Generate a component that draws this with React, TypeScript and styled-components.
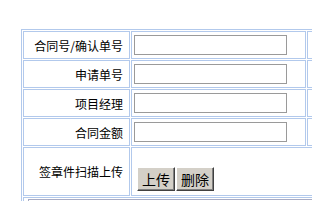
import React from "react";
import styled, { createGlobalStyle } from "styled-components";

const Global = createGlobalStyle`
  html, body {
    margin: 0;
    padding: 0;
    background: #ffffff;
    overflow: hidden;
  }
  body {
    font-family: "Noto Sans CJK SC", "Noto Sans", sans-serif;
  }
`;

const Page = styled.div`
  padding: 29px 0 0 21px;
  width: 500px;
`;

const FormGrid = styled.div`
  display: grid;
  grid-template-columns: 107px 175px 1fr;
  grid-template-rows: repeat(4, 28px) 49px 40px;
  gap: 1px;
  padding: 1px;
  border: 1px solid #b2c9ec;
  width: 420px;
  box-sizing: border-box;
`;

const Cell = styled.div<{ $span?: number }>`
  box-sizing: border-box;
  border: 1px solid #b2c9ec;
  display: flex;
  align-items: center;
  grid-column: ${(p) => (p.$span ? `span ${p.$span}` : "auto")};
`;

const LabelCell = styled(Cell)`
  justify-content: flex-end;
  padding-right: 6px;
  font-size: 12px;
  color: #000;
  white-space: nowrap;
`;

const FieldCell = styled(Cell)`
  padding-left: 2px;
`;

const UploadCell = styled(Cell)`
  align-items: flex-end;
  padding: 0 0 4px 5px;
`;

const TextInput = styled.input`
  box-sizing: border-box;
  width: 153px;
  height: 20px;
  margin: 0;
  padding: 0 2px;
  border: 1px solid #9a9a9a;
  background: #fff;
  outline: none;
  font-size: 12px;
`;

const ButtonGroup = styled.div`
  display: flex;
  gap: 1px;
`;

const ClassicButton = styled.button`
  box-sizing: border-box;
  width: 38px;
  height: 24px;
  padding: 0;
  margin: 0;
  background: #d4d0c8;
  border-style: solid;
  border-width: 1px;
  border-color: #ffffff #404040 #404040 #ffffff;
  box-shadow: inset -1px -1px 0 #808080;
  font-family: "Noto Sans CJK SC", sans-serif;
  font-size: 14px;
  line-height: 20px;
  color: #000;
  cursor: pointer;
`;

const FooterCell = styled.div`
  grid-column: span 3;
  box-sizing: border-box;
  border: 1px solid #b2c9ec;
  padding: 1px 0 0 4px;
`;

const FooterBox = styled.div`
  border-top: 1px solid #a8acc4;
  border-left: 1px solid #a8acc4;
  height: 30px;
`;

const fields = ["合同号/确认单号", "申请单号", "项目经理", "合同金额"];

export default function App() {
  return (
    <>
      <Global />
      <Page>
        <FormGrid>
          {fields.map((f) => (
            <React.Fragment key={f}>
              <LabelCell>{f}</LabelCell>
              <FieldCell>
                <TextInput type="text" />
              </FieldCell>
              <Cell />
            </React.Fragment>
          ))}
          <LabelCell>签章件扫描上传</LabelCell>
          <UploadCell $span={2}>
            <ButtonGroup>
              <ClassicButton type="button">上传</ClassicButton>
              <ClassicButton type="button">删除</ClassicButton>
            </ButtonGroup>
          </UploadCell>
          <FooterCell>
            <FooterBox />
          </FooterCell>
        </FormGrid>
      </Page>
    </>
  );
}
